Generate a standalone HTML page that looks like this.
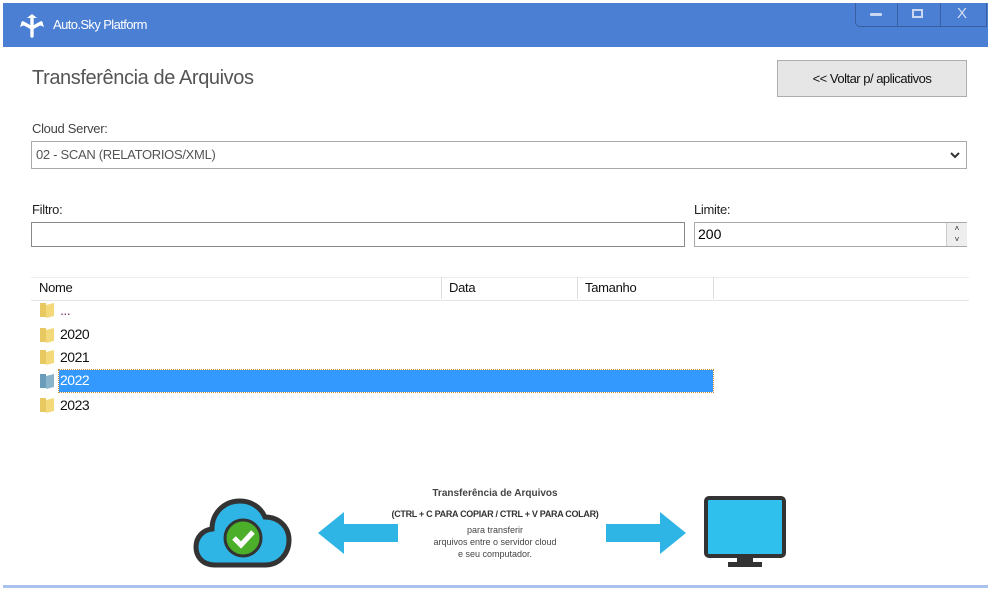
<!DOCTYPE html>
<html><head><meta charset="utf-8"><style>
body{margin:0;width:988px;height:591px;background:#fff;position:relative;overflow:hidden;font-family:"Liberation Sans",sans-serif;}
.a{position:absolute}
.tb{left:3px;top:3px;width:985px;height:44px;background:#4b7fd3}
.lbl{font-size:13px;color:#222;letter-spacing:-0.3px}
.box{border:1px solid #a9a9a9;background:#fff;box-sizing:border-box}
.row{font-size:14px;color:#111;left:60px;letter-spacing:-0.5px}
.fold{width:17px;height:17px;left:39px}
</style></head><body>
<div class="a tb"></div>
<svg class="a" style="left:18px;top:14px" width="28" height="24" viewBox="0 0 28 24"><g fill="none" stroke="#fff" stroke-width="3.4" stroke-linecap="round"><path d="M14 3V22"/><path d="M14 14L5 9"/><path d="M14 14L23 9"/></g><path d="M9 4l5-4 5 4z" fill="#fff"/><path d="M2 13l2-6 5 3z" fill="#fff"/><path d="M26 13l-2-6-5 3z" fill="#fff"/></svg>
<div class="a" style="left:53px;top:17px;font-size:13px;color:#fff;letter-spacing:-0.6px">Auto.Sky Platform</div>
<div class="a" style="left:855px;top:3px;width:130px;height:23px;border:1px solid #3a5fa0;border-top:none;border-radius:0 0 0 5px"></div>
<div class="a" style="left:897px;top:3px;width:1px;height:23px;background:#3a5fa0"></div>
<div class="a" style="left:940px;top:3px;width:1px;height:23px;background:#3a5fa0"></div>
<div class="a" style="left:870px;top:13px;width:12px;height:3px;background:#c9d7f0;border-radius:1px"></div>
<div class="a" style="left:912px;top:9px;width:11px;height:9px;border:2px solid #c9d7f0;box-sizing:border-box"></div>
<div class="a" style="left:957px;top:5px;font-size:15px;color:#d3def2">X</div>
<div class="a" style="left:32px;top:67px;font-size:20px;color:#555;letter-spacing:-0.4px">Transferência de Arquivos</div>
<div class="a" style="left:777px;top:60px;width:190px;height:37px;background:#e6e6e6;border:1px solid #adadad;box-sizing:border-box;font-size:13px;color:#111;text-align:center;line-height:35px;letter-spacing:-0.5px">&lt;&lt; Voltar p/ aplicativos</div>
<div class="a lbl" style="left:32px;top:121px;color:#444">Cloud Server:</div>
<div class="a box" style="left:31px;top:141px;width:936px;height:28px;font-size:13px;color:#555;padding:5px 4px;letter-spacing:-0.3px">02 - SCAN (RELATORIOS/XML)</div>
<svg class="a" style="left:950px;top:151px" width="10" height="8"><path d="M1 2l4 4 4-4" stroke="#333" stroke-width="2" fill="none"/></svg>
<div class="a lbl" style="left:32px;top:202px">Filtro:</div>
<div class="a box" style="left:31px;top:222px;width:654px;height:25px;border-color:#888"></div>
<div class="a lbl" style="left:694px;top:202px">Limite:</div>
<div class="a box" style="left:694px;top:222px;width:273px;height:25px;font-size:14px;padding:3px 3px">200</div>
<div class="a" style="left:946px;top:223px;width:20px;height:23px;background:#eee;border-left:1px solid #ccc;font-size:8px;text-align:center;line-height:11px;color:#222">˄<br>˅</div>
<div class="a" style="left:31px;top:277px;width:938px;height:22px;background:#fff;border-top:1px solid #ececec;border-bottom:1px solid #e5e5e5"></div>
<div class="a" style="left:441px;top:277px;width:1px;height:22px;background:#ddd"></div>
<div class="a" style="left:577px;top:277px;width:1px;height:22px;background:#ddd"></div>
<div class="a" style="left:713px;top:277px;width:1px;height:22px;background:#ddd"></div>
<div class="a lbl" style="left:39px;top:280px;color:#111">Nome</div>
<div class="a lbl" style="left:449px;top:280px;color:#111">Data</div>
<div class="a lbl" style="left:585px;top:280px;color:#111">Tamanho</div>
<div class="a" style="left:59px;top:370px;width:654px;height:22px;background:#3399ff;outline:1px dotted #d08a3a"></div>
<svg class="a fold" style="top:301px" viewBox="0 0 17 17"><path d="M1 2h6v14H1z" fill="#e8c860"/><path d="M7 4l8-2v13l-8 2z" fill="#f3d97a"/></svg>
<svg class="a fold" style="top:326px" viewBox="0 0 17 17"><path d="M1 2h6v14H1z" fill="#e8c860"/><path d="M7 4l8-2v13l-8 2z" fill="#f3d97a"/></svg>
<svg class="a fold" style="top:348px" viewBox="0 0 17 17"><path d="M1 2h6v14H1z" fill="#e8c860"/><path d="M7 4l8-2v13l-8 2z" fill="#f3d97a"/></svg>
<svg class="a fold" style="top:372px" viewBox="0 0 17 17"><path d="M1 2h6v14H1z" fill="#6a9bb8"/><path d="M7 4l8-2v13l-8 2z" fill="#8ab4cc"/></svg>
<svg class="a fold" style="top:396px" viewBox="0 0 17 17"><path d="M1 2h6v14H1z" fill="#e8c860"/><path d="M7 4l8-2v13l-8 2z" fill="#f3d97a"/></svg>
<div class="a row" style="top:302px;color:#7a3a7a">...</div>
<div class="a row" style="top:326px">2020</div>
<div class="a row" style="top:349px">2021</div>
<div class="a row" style="top:372px;color:#fff">2022</div>
<div class="a row" style="top:397px">2023</div>
<svg class="a" style="left:193px;top:495px" width="102" height="74" viewBox="0 0 102 74"><path d="M22 70C8 70 3 60 3 52c0-10 7-17 16-18 0-16 12-28 28-28 12 0 21 7 25 16 14 0 24 10 24 23 0 14-10 25-24 25z" fill="#2fb4e6" stroke="#333" stroke-width="5"/><circle cx="50" cy="43" r="18" fill="#4caf2a" stroke="#333" stroke-width="3"/><path d="M41 43l7 7 12-13" stroke="#fff" stroke-width="5" fill="none"/></svg>
<svg class="a" style="left:318px;top:512px" width="80" height="42"><path d="M0 21L26 0v12h54v18H26v12z" fill="#2fb4e6"/></svg>
<svg class="a" style="left:606px;top:512px" width="80" height="42"><path d="M80 21L54 0v12H0v18h54v12z" fill="#2fb4e6"/></svg>
<svg class="a" style="left:704px;top:496px" width="82" height="72"><rect x="2" y="2" width="78" height="58" rx="3" fill="#2fc0ee" stroke="#333" stroke-width="4"/><rect x="33" y="60" width="16" height="7" fill="#333"/><rect x="24" y="66" width="34" height="5" fill="#333"/></svg>
<div class="a" style="left:370px;top:488px;width:250px;text-align:center;font-size:10px;color:#444;font-weight:bold">Transferência de Arquivos</div>
<div class="a" style="left:370px;top:509px;width:250px;text-align:center;font-size:9px;color:#333;font-weight:bold;letter-spacing:-0.3px">(CTRL + C PARA COPIAR / CTRL + V PARA COLAR)</div>
<div class="a" style="left:370px;top:524px;width:250px;text-align:center;font-size:9px;color:#444;line-height:12px">para transferir<br>arquivos entre o servidor cloud<br>e seu computador.</div>
<div class="a" style="left:3px;top:585px;width:985px;height:3px;background:#a9c2ee"></div>
</body></html>
